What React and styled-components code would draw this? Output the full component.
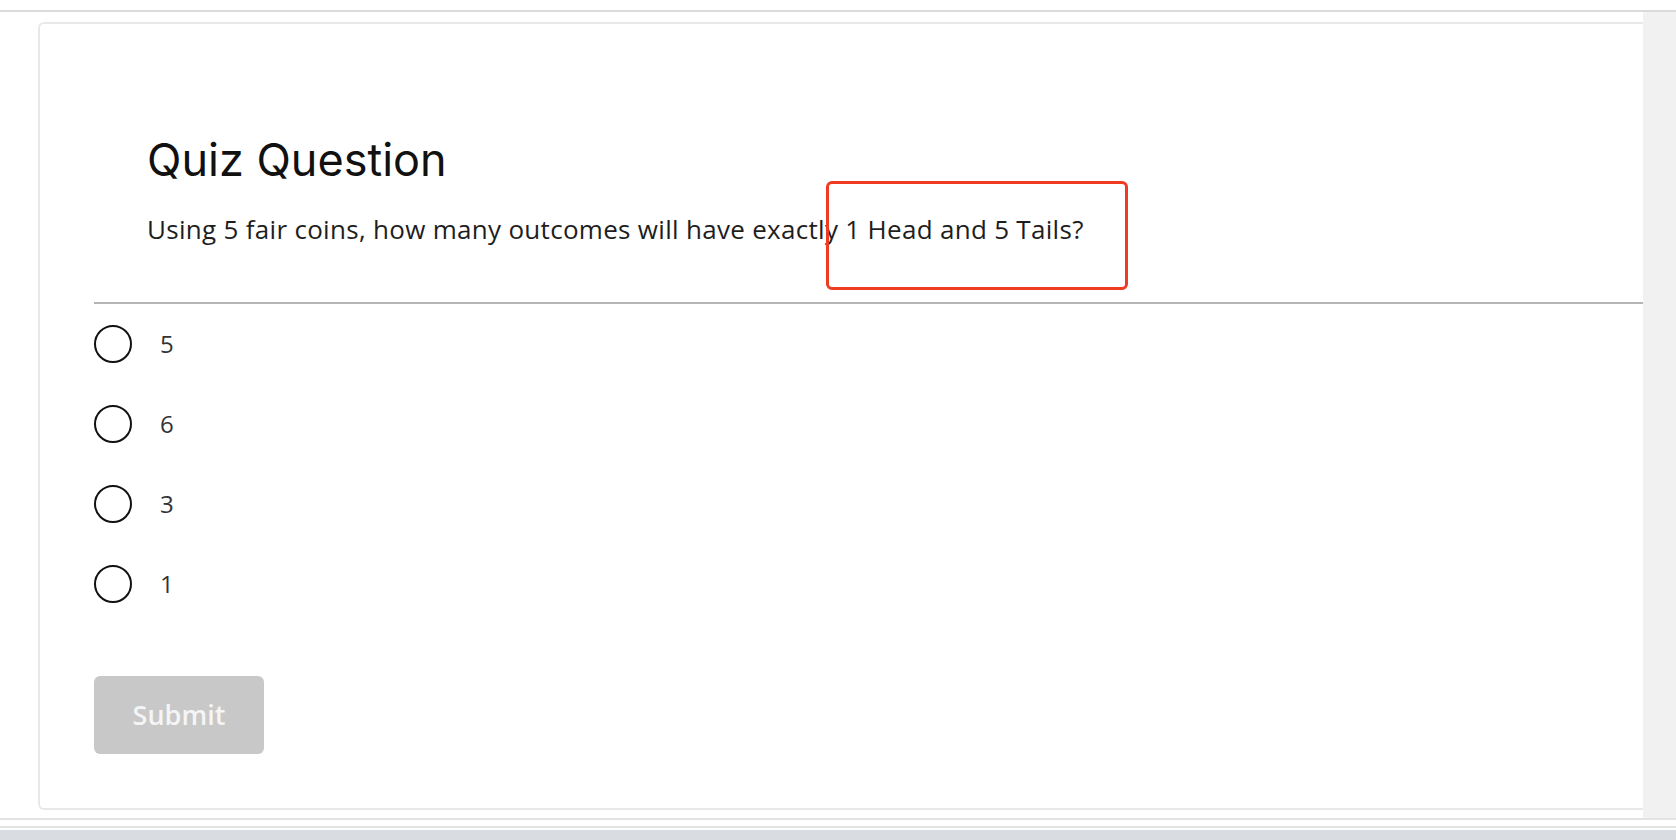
import React from "react";
import styled, { createGlobalStyle } from "styled-components";

const GlobalStyle = createGlobalStyle`
  html, body {
    margin: 0;
    padding: 0;
    background: #ffffff;
    overflow: hidden;
  }
`;

const options = ["5", "6", "3", "1"];

function App() {
  return (
    <Page>
      <GlobalStyle />
      <TopRule />
      <Body>
        <Stage>
          <Card>
            <Header>
              <Title>Quiz Question</Title>
              <Prompt>
                Using 5 fair coins, how many outcomes will have exactly 1 Head and 5 Tails?
              </Prompt>
              <Highlight />
            </Header>
            <Divider />
            <Choices>
              {options.map((o) => (
                <Choice key={o}>
                  <Radio type="radio" name="quiz" value={o} />
                  <ChoiceLabel>{o}</ChoiceLabel>
                </Choice>
              ))}
            </Choices>
            <SubmitButton disabled>Submit</SubmitButton>
          </Card>
        </Stage>
        <ScrollTrack />
      </Body>
      <FootRule />
      <FootGap $h={6} />
      <FootRule />
      <FootGap $h={2} />
      <FootBar />
    </Page>
  );
}

const Page = styled.div`
  display: flex;
  flex-direction: column;
  height: 840px;
  width: 1676px;
  background: #ffffff;
`;

const TopRule = styled.div`
  margin-top: 10px;
  height: 2px;
  background: #dadada;
  flex-shrink: 0;
`;

const Body = styled.div`
  display: flex;
  height: 806px;
  flex-shrink: 0;
`;

const Stage = styled.div`
  flex: 1;
  padding: 10px 0 8px 38px;
  display: flex;
`;

const Card = styled.div`
  flex: 1;
  display: flex;
  flex-direction: column;
  align-items: flex-start;
  border: 2px solid #e8e8e8;
  border-right: none;
  border-radius: 6px 0 0 6px;
  padding: 109px 0 0 54px;
`;

const Header = styled.div`
  position: relative;
  align-self: stretch;
  padding-left: 53px;
  padding-bottom: 57px;
`;

const Title = styled.h1`
  margin: 0;
  font-family: Inter, "Liberation Sans", sans-serif;
  font-size: 45px;
  font-weight: 400;
  line-height: 53px;
  color: #111111;
`;

const Prompt = styled.p`
  margin: 27px 0 0;
  font-family: "Open Sans", "Liberation Sans", sans-serif;
  font-size: 26px;
  letter-spacing: 0.3px;
  line-height: 32px;
  color: #1e1e1e;
`;

const Highlight = styled.div`
  position: absolute;
  left: 732px;
  top: 48px;
  width: 302px;
  height: 109px;
  border: 3px solid #ef3b21;
  border-radius: 6px;
  box-sizing: border-box;
`;

const Divider = styled.div`
  align-self: stretch;
  height: 1.5px;
  background: #b4b4b4;
`;

const Choices = styled.div`
  display: flex;
  flex-direction: column;
`;

const Choice = styled.label`
  display: flex;
  align-items: center;
  height: 80px;
  gap: 28px;
`;

const Radio = styled.input`
  appearance: none;
  margin: 0;
  width: 38px;
  height: 38px;
  border: 2.5px solid #111111;
  border-radius: 50%;
  background: #ffffff;
  box-sizing: border-box;
`;

const ChoiceLabel = styled.span`
  font-family: "Open Sans", "Liberation Sans", sans-serif;
  font-size: 24px;
  color: #333333;
`;

const SubmitButton = styled.button`
  margin-top: 52px;
  width: 170px;
  height: 78px;
  border: none;
  border-radius: 6px;
  background: #c8c8c8;
  color: #f5f5f5;
  font-family: "Open Sans", "Liberation Sans", sans-serif;
  font-size: 27px;
  font-weight: 600;
`;

const ScrollTrack = styled.div`
  width: 33px;
  background: #f1f1f1;
`;

const FootRule = styled.div`
  height: 2px;
  background: #e3e3e3;
  flex-shrink: 0;
`;

const FootGap = styled.div`
  height: ${(p) => p.$h}px;
  flex-shrink: 0;
`;

const FootBar = styled.div`
  flex: 1;
  background: #d9dce0;
`;

export default App;
